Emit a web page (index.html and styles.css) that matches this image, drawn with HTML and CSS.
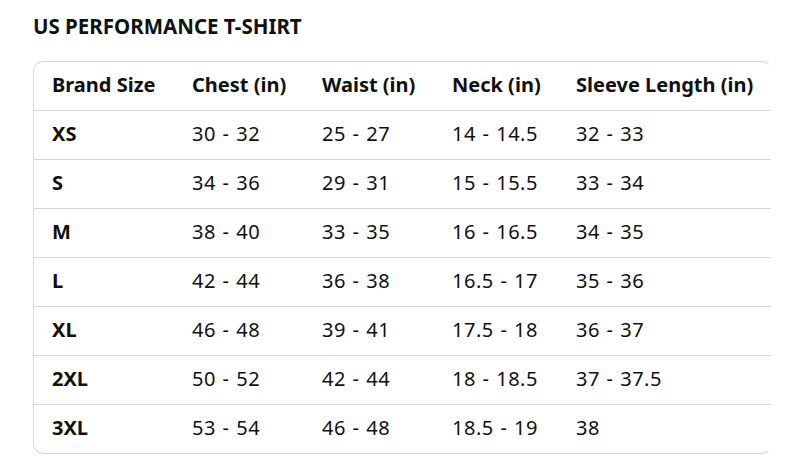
FILE: index.html
```html
<!DOCTYPE html>
<html>
<head>
<meta charset="utf-8">
<link rel="stylesheet" href="styles.css">
</head>
<body>
<div class="page">
  <h2 class="title">US PERFORMANCE T-SHIRT</h2>
  <div class="card">
    <table class="chart">
      <colgroup>
        <col class="c1"><col class="c2"><col class="c3"><col class="c4"><col class="c5">
      </colgroup>
      <thead>
        <tr><th>Brand Size</th><th>Chest (in)</th><th>Waist (in)</th><th>Neck (in)</th><th>Sleeve Length (in)</th></tr>
      </thead>
      <tbody>
        <tr><th>XS</th><td>30 - 32</td><td>25 - 27</td><td>14 - 14.5</td><td>32 - 33</td></tr>
        <tr><th>S</th><td>34 - 36</td><td>29 - 31</td><td>15 - 15.5</td><td>33 - 34</td></tr>
        <tr><th>M</th><td>38 - 40</td><td>33 - 35</td><td>16 - 16.5</td><td>34 - 35</td></tr>
        <tr><th>L</th><td>42 - 44</td><td>36 - 38</td><td>16.5 - 17</td><td>35 - 36</td></tr>
        <tr><th>XL</th><td>46 - 48</td><td>39 - 41</td><td>17.5 - 18</td><td>36 - 37</td></tr>
        <tr><th>2XL</th><td>50 - 52</td><td>42 - 44</td><td>18 - 18.5</td><td>37 - 37.5</td></tr>
        <tr class="last"><th>3XL</th><td>53 - 54</td><td>46 - 48</td><td>18.5 - 19</td><td>38</td></tr>
      </tbody>
    </table>
  </div>
</div>
</body>
</html>
```
FILE: styles.css
```css
html, body {
  margin: 0;
  padding: 0;
  background: #ffffff;
}
body {
  font-family: "Noto Sans", "Liberation Sans", sans-serif;
  color: #0f1111;
}
.page {
  padding: 12px 0 0 33px;
  width: 739px;
}
.title {
  margin: 0 0 21px 0;
  font-size: 20.5px;
  font-weight: 700;
  line-height: 28px;
  letter-spacing: 0;
}
.card {
  border: 1px solid #d5d9d9;
  border-right-color: transparent;
  border-radius: 10px;
  overflow: hidden;
  width: 737px;
}
.chart {
  border-collapse: separate;
  border-spacing: 0;
  width: 738px;
  table-layout: fixed;
  font-size: 20px;
}
.c1 { width: 140px; }
.c2 { width: 130px; }
.c3 { width: 130px; }
.c4 { width: 124px; }
.c5 { width: 214px; }
.chart th, .chart td {
  text-align: left;
  padding: 0 0 4px 18px;
  height: 49px;
  box-sizing: border-box;
  border-bottom: 1px solid #d5d9d9;
  white-space: nowrap;
  vertical-align: middle;
}
.chart th {
  font-weight: 700;
}
.chart td {
  font-weight: 400;
  letter-spacing: 0.5px;
  word-spacing: 1px;
}
.chart .last th, .chart .last td {
  border-bottom: none;
  height: 48px;
}
```
